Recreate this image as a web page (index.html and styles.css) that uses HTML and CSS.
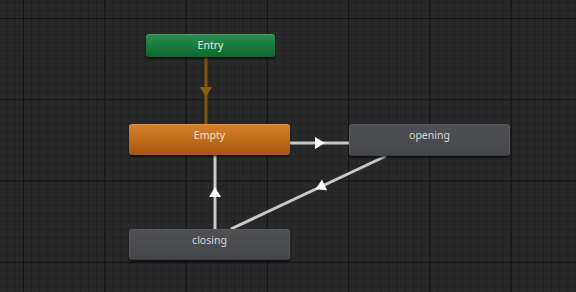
FILE: index.html
```html
<!DOCTYPE html>
<html lang="en">
<head>
    <meta charset="UTF-8">
    <title>Animator</title>
    <link rel="stylesheet" href="styles.css">
</head>
<body>
    <div class="graph">
        <!-- transitions -->
        <svg class="edges" width="576" height="292" viewBox="0 0 576 292">
            <line class="edge entry-edge" x1="206" y1="57" x2="206" y2="124" />
            <polygon class="arrow entry-arrow" points="-5,-6 5,0 -5,6" transform="translate(206 92) rotate(90)" />

            <line class="edge" x1="290" y1="143" x2="349" y2="143" />
            <polygon class="arrow" points="-5,-6 5,0 -5,6" transform="translate(320 143)" />

            <line class="edge" x1="215" y1="229" x2="215" y2="155" />
            <polygon class="arrow" points="-5,-6 5,0 -5,6" transform="translate(215 192) rotate(-90)" />

            <line class="edge" x1="386" y1="156" x2="231" y2="229" />
            <polygon class="arrow" points="-5,-6 5,0 -5,6" transform="translate(320 187) rotate(154.8)" />
        </svg>

        <!-- states -->
        <div class="node entry" style="left:146px; top:34px; width:129px; height:23px;">Entry</div>
        <div class="node default" style="left:129px; top:124px; width:161px; height:31px;">Empty</div>
        <div class="node state" style="left:349px; top:124px; width:161px; height:32px;">opening</div>
        <div class="node state" style="left:129px; top:229px; width:161px; height:31px;">closing</div>
    </div>
</body>
</html>
```

FILE: styles.css
```css
/* Canvas */
body {
    margin: 0;
    background-color: #292929;
    font-family: "Noto Sans", "Liberation Sans", Arial, sans-serif;
}

.graph {
    position: relative;
    width: 576px;
    height: 292px;
    overflow: hidden;
    background-color: #292929;
    background-image:
        linear-gradient(to right, #141414 1px, transparent 1px),
        linear-gradient(to bottom, #141414 1px, transparent 1px),
        linear-gradient(to right, #212121 1px, transparent 1px),
        linear-gradient(to bottom, #212121 1px, transparent 1px);
    background-size: 81.3px 81.3px, 81.3px 81.3px, 8.13px 8.13px, 8.13px 8.13px;
    background-position: 23px 18px, 23px 18px, 23px 18px, 23px 18px;
}

/* Transitions */
.edges {
    position: absolute;
    left: 0;
    top: 0;
}

.edge {
    stroke: #c9c9c9;
    stroke-width: 3;
}

.arrow {
    fill: #ffffff;
}

.entry-edge {
    stroke: #805212;
}

.entry-arrow {
    fill: #8f5d12;
}

/* State nodes */
.node {
    position: absolute;
    box-sizing: border-box;
    padding-top: 3px;
    line-height: 15px;
    text-align: center;
    font-size: 10.5px;
    color: #d8d8d8;
    border-radius: 3px;
    box-shadow: 0 2px 2px rgba(0, 0, 0, 0.55);
}

.entry {
    background: linear-gradient(to bottom, #2b8c4f, #0b682b);
    border-top: 1px solid #3da060;
    color: #e0ebe3;
}

.default {
    background: linear-gradient(to bottom, #d6802a, #a5570e);
    border-top: 1px solid #e29144;
    color: #f0e4d2;
}

.state {
    background: linear-gradient(to bottom, #4e5054, #45474b);
    border: 1px solid #56585c;
    border-bottom-color: #3a3c3f;
}
```
